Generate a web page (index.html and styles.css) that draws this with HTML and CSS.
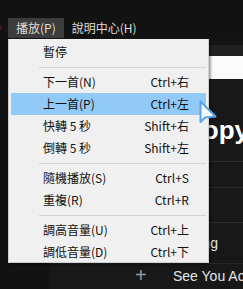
FILE: index.html
```html
<!DOCTYPE html>
<html lang="zh-Hant">
<head>
  <meta charset="UTF-8" />
  <title>播放選單</title>
  <meta name="viewport" content="width=device-width, initial-scale=1.0" />
  <link rel="stylesheet" href="styles.css">
</head>
<body>
  <div class="app">
    <div class="menubar">
      <span class="rec-dot"></span>
      <span class="menubar-item active">播放(P)</span>
      <span class="menubar-item">說明中心(H)</span>
    </div>

    <div class="content">
      <aside class="sidebar"></aside>
      <main class="main">
        <div class="strip"></div>
        <div class="tabs"></div>
        <div class="banner"></div>
        <h1 class="title">Copycat Hits</h1>
        <div class="row row-a"></div>
        <div class="row row-b"></div>
        <div class="row row-c">
          <span class="track">Feeling</span>
        </div>
        <div class="row row-d">
          <span class="add">+</span>
          <span class="track">See You Across</span>
        </div>
      </main>
    </div>
  </div>

  <!-- Dropdown -->
  <div class="dropdown">
    <div class="item"><span>暫停</span></div>
    <div class="sep"></div>
    <div class="item"><span>下一首(N)</span><span>Ctrl+右</span></div>
    <div class="item hover"><span>上一首(P)</span><span>Ctrl+左</span></div>
    <div class="item"><span>快轉 5 秒</span><span>Shift+右</span></div>
    <div class="item"><span>倒轉 5 秒</span><span>Shift+左</span></div>
    <div class="sep"></div>
    <div class="item"><span>隨機播放(S)</span><span>Ctrl+S</span></div>
    <div class="item"><span>重複(R)</span><span>Ctrl+R</span></div>
    <div class="sep"></div>
    <div class="item"><span>調高音量(U)</span><span>Ctrl+上</span></div>
    <div class="item"><span>調低音量(D)</span><span>Ctrl+下</span></div>
  </div>

  <svg class="cursor" width="20" height="26" viewBox="0 0 20 26">
    <path d="M1.5 1.5 L1.5 22 L6 17.5 L16.5 16.5 Z" fill="#f4f9ff" stroke="#5aa6f0" stroke-width="2" stroke-linejoin="round" />
  </svg>
</body>
</html>
```

FILE: styles.css
```css
* {
  box-sizing: border-box;
}

body {
  margin: 0;
  width: 243px;
  height: 289px;
  overflow: hidden;
  background: #121212;
  font-family: "Noto Sans CJK TC", sans-serif;
  font-size: 12px;
}

.app {
  display: flex;
  flex-direction: column;
  height: 100%;
}

/* Menu bar */
.menubar {
  display: flex;
  align-items: stretch;
  height: 39px;
  padding: 18px 0 0 8px;
  position: relative;
}

.rec-dot {
  position: absolute;
  left: -3px;
  top: 25px;
  width: 5px;
  height: 5px;
  border-radius: 50%;
  background: #4a1818;
}

.menubar-item {
  display: flex;
  align-items: center;
  padding: 0 8px;
  color: #dcdcdc;
  line-height: 1;
}

.menubar-item.active {
  background: #3c3c3c;
}

/* Page behind */
.content {
  flex: 1;
  display: grid;
  grid-template-columns: 49px 1fr;
}

.sidebar {
  background: #121212;
}

.main {
  background: #181818;
  display: flex;
  flex-direction: column;
}

.strip {
  height: 7px;
  background: #141414;
}

.tabs {
  height: 11px;
  background: #202020;
}

.banner {
  height: 23px;
  background: #fbfbfb;
}

.title {
  margin: 0;
  height: 82px;
  padding: 38px 0 0 135px;
  font-family: "Liberation Sans", Arial, sans-serif;
  font-weight: bold;
  font-size: 26px;
  line-height: 26px;
  color: #fff;
  white-space: nowrap;
  overflow: hidden;
}

.row {
  border-top: 1px solid #2a2a2a;
  display: flex;
  align-items: center;
  white-space: nowrap;
  overflow: hidden;
  font-family: "Liberation Sans", Arial, sans-serif;
  font-size: 14px;
  color: #e6e6e6;
}

.row-a { height: 26px; }
.row-b { height: 35px; }
.row-c { height: 41px; padding-left: 123px; }
.row-d { flex: 1; padding-left: 86px; padding-bottom: 2px; border-top-color: #262626; }

.add {
  width: 38px;
  font-size: 20px;
  font-weight: 300;
  color: #9a9a9a;
}

/* Dropdown */
.dropdown {
  position: absolute;
  left: 8px;
  top: 39px;
  width: 201px;
  height: 224px;
  padding-top: 2px;
  background: #f0f0f0;
  border: 1px solid #cfcfcf;
  border-top: none;
  box-shadow: 2px 2px 2px rgba(0,0,0,0.35);
}

.item {
  display: flex;
  justify-content: space-between;
  align-items: center;
  height: 22px;
  margin: 0 2px;
  padding: 0 17px 0 32px;
  color: #111;
  line-height: 1;
}

.item.hover {
  background: #91c9f7;
}

.sep {
  height: 8px;
  margin: 0 2px 0 30px;
  display: flex;
  align-items: center;
}

.sep::after {
  content: "";
  flex: 1;
  border-top: 1px solid #d4d4d4;
}

.cursor {
  position: absolute;
  left: 199px;
  top: 100px;
}
```
